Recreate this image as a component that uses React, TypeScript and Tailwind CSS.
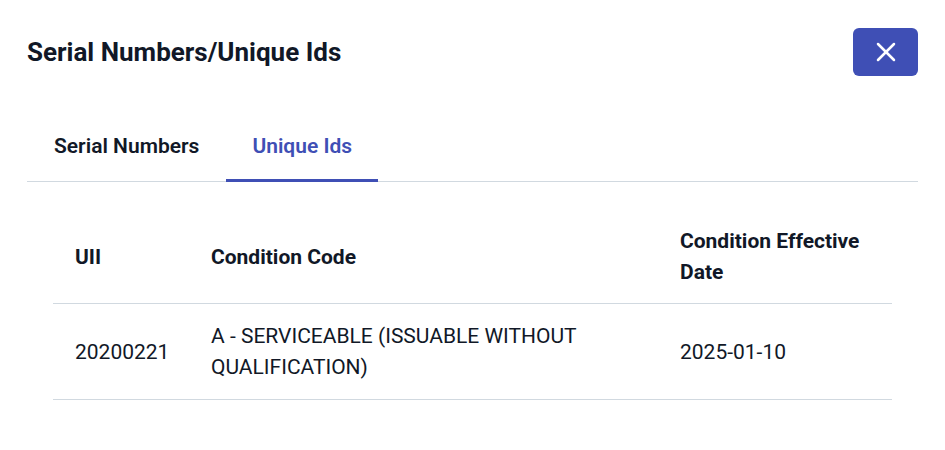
import React, { useState } from 'react';
import { X } from 'lucide-react';

const rows = [
  {
    uii: '20200221',
    code: 'A - SERVICEABLE (ISSUABLE WITHOUT QUALIFICATION)',
    date: '2025-01-10',
  },
];

const App: React.FC = () => {
  const [tab, setTab] = useState<'serial' | 'unique'>('unique');

  return (
    <div
      className="w-[945px] h-[450px] bg-white px-[27px] pt-[28px] text-[#111827]"
      style={{ fontFamily: 'Roboto, "Noto Sans", sans-serif' }}
    >
      {/* Header */}
      <div className="flex items-center justify-between h-[48px]">
        <h1 className="text-[26px] font-bold leading-none">Serial Numbers/Unique Ids</h1>
        <button className="flex items-center justify-center w-[65px] h-[48px] rounded-[6px] bg-[#3f4fb5] text-white">
          <X size={32} strokeWidth={1.9} />
        </button>
      </div>

      {/* Tabs */}
      <div className="mt-[30px] flex border-b border-[#d1d9e0]">
        <button
          onClick={() => setTab('serial')}
          className={`h-[76px] pt-[8px] px-[27px] text-[21px] font-semibold border-b-[3px] -mb-px ${
            tab === 'serial' ? 'text-[#3f4fb5] border-[#3f4fb5]' : 'text-[#111827] border-transparent'
          }`}
        >
          Serial Numbers
        </button>
        <button
          onClick={() => setTab('unique')}
          className={`h-[76px] pt-[8px] px-[26px] text-[21px] font-semibold border-b-[3px] -mb-px ${
            tab === 'unique' ? 'text-[#3f4fb5] border-[#3f4fb5]' : 'text-[#111827] border-transparent'
          }`}
        >
          Unique Ids
        </button>
      </div>

      {/* Table */}
      <div className="mx-[26px] mt-[27px]">
        <table className="w-full table-fixed border-collapse text-left">
          <colgroup>
            <col className="w-[136px]" />
            <col className="w-[469px]" />
            <col />
          </colgroup>
          <thead>
            <tr className="border-b border-[#d1d9e0]">
              <th className="px-[22px] pt-[17px] pb-[15px] text-[21px] font-bold leading-[31px]">UII</th>
              <th className="px-[22px] pt-[17px] pb-[15px] text-[21px] font-bold leading-[31px]">Condition Code</th>
              <th className="px-[22px] pt-[17px] pb-[15px] text-[21px] font-bold leading-[31px]">Condition Effective Date</th>
            </tr>
          </thead>
          <tbody>
            {rows.map((r) => (
              <tr key={r.uii} className="border-b border-[#d1d9e0]">
                <td className="px-[22px] pt-[17px] pb-[16px] text-[21px] leading-[31px]">{r.uii}</td>
                <td className="px-[22px] pt-[17px] pb-[16px] text-[21px] leading-[31px]">
                  <div className="w-[380px]">{r.code}</div>
                </td>
                <td className="px-[22px] pt-[17px] pb-[16px] text-[21px] leading-[31px]">{r.date}</td>
              </tr>
            ))}
          </tbody>
        </table>
      </div>
    </div>
  );
};

export default App;
